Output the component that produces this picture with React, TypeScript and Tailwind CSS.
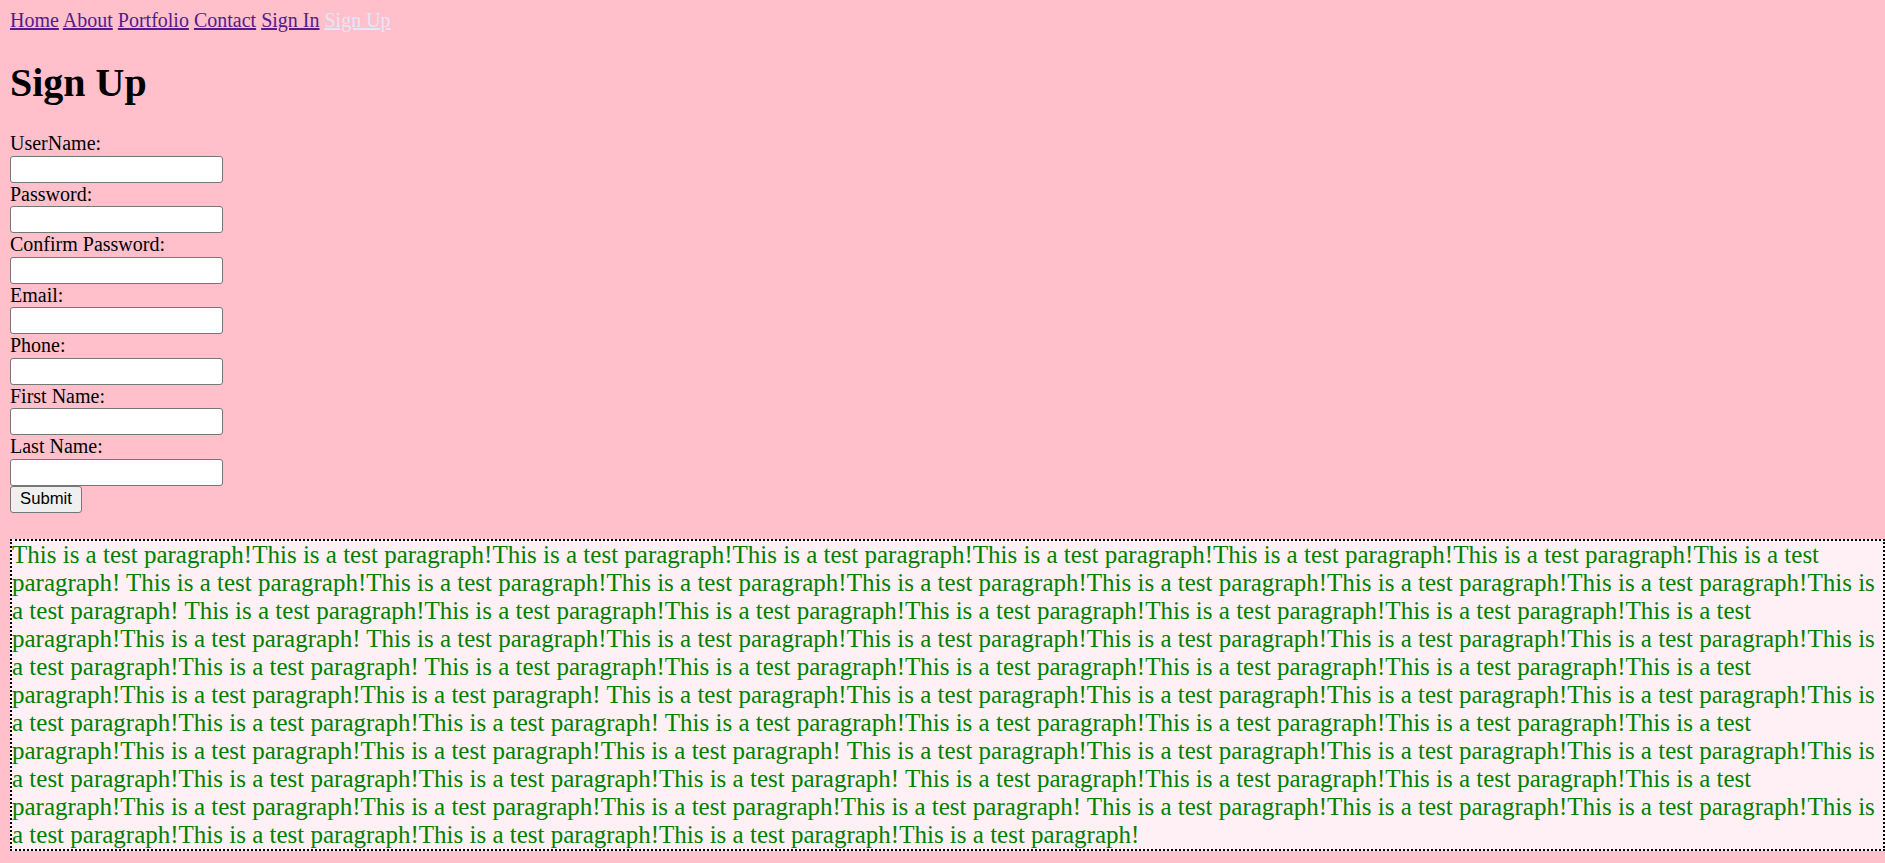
import React from "react";

const fields = [
  "UserName:",
  "Password:",
  "Confirm Password:",
  "Email:",
  "Phone:",
  "First Name:",
  "Last Name:",
];

const paragraph = Array.from({ length: 10 }, () =>
  "This is a test paragraph!".repeat(8)
).join(" ");

export default function App() {
  return (
    <div className="h-screen overflow-hidden bg-[#ffc0cb] p-[10px] font-['Liberation_Serif',serif] text-[20px] text-black">
      <nav className="-mt-[1px] h-[23px] leading-[23px] whitespace-nowrap">
        <a href="#" className="text-[#551a8b] underline">Home</a>{" "}
        <a href="#" className="text-[#551a8b] underline">About</a>{" "}
        <a href="#" className="text-[#551a8b] underline">Portfolio</a>{" "}
        <a href="#" className="text-[#551a8b] underline">Contact</a>{" "}
        <a href="#" className="text-[#551a8b] underline">Sign In</a>{" "}
        <a href="#" className="text-[#e6e6fa] underline">Sign Up</a>
      </nav>
      <h1 className="mt-[28px] mb-[26px] text-[40px] font-bold leading-[46px]">Sign Up</h1>
      <form className="flex flex-col items-start" onSubmit={(e) => e.preventDefault()}>
        {fields.map((f) => (
          <div key={f} className="flex flex-col items-start">
            <label className="block h-[23.5px] leading-[23.5px]">{f}</label>
            <input
              type="text"
              className="block h-[27px] w-[213px] rounded-[3px] border border-[#767676] bg-white"
            />
          </div>
        ))}
        <button
          type="submit"
          className="block h-[27px] w-[72px] rounded-[3px] border border-[#767676] bg-[#efefef] font-['Liberation_Sans',sans-serif] text-[16.7px] leading-[20px] text-black"
        >
          Submit
        </button>
      </form>
      <p className="mt-[26px] w-[1875px] border-2 border-dotted border-black bg-[#fff0f5] text-[25px] leading-[28px] text-[#008000]">
        {paragraph}
      </p>
    </div>
  );
}
